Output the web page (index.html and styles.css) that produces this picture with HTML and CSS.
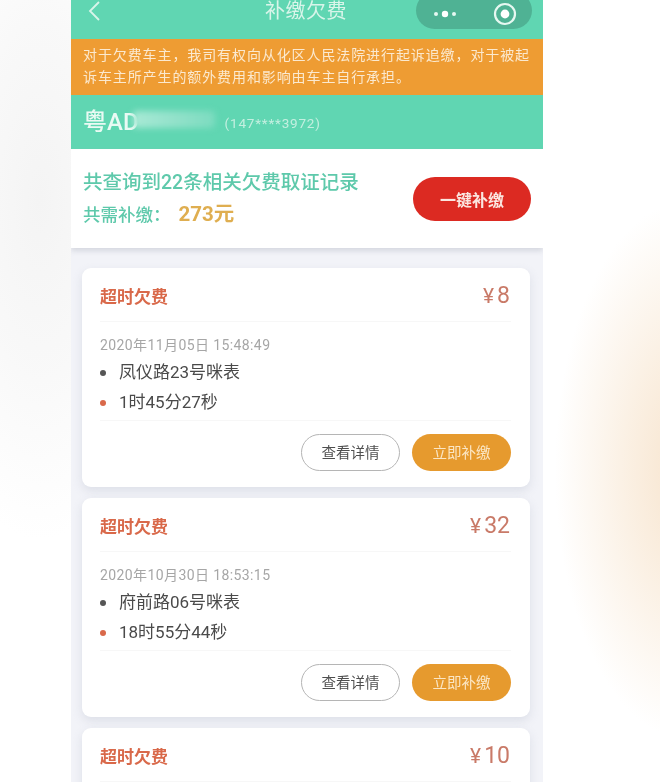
FILE: index.html
```html
<!DOCTYPE html>
<html lang="zh-CN">
<head>
<meta charset="utf-8">
<title>补缴欠费</title>
<link rel="stylesheet" href="styles.css">
</head>
<body>
<main class="phone">
  <header class="nav">
    <svg class="back" width="14" height="24" viewBox="0 0 14 24"><path d="M12 2 3 11l9 9" fill="none" stroke="#d8f5ea" stroke-width="1.8"/></svg>
    <h1 class="nav-title">补缴欠费</h1>
    <div class="capsule">
      <svg width="28" height="10" viewBox="0 0 28 10"><circle cx="4" cy="5" r="2" fill="#e6f8f1"/><circle cx="13" cy="5" r="3.2" fill="#fff"/><circle cx="22" cy="5" r="2" fill="#e6f8f1"/></svg>
      <svg width="24" height="24" viewBox="0 0 24 24"><circle cx="12" cy="12" r="10" fill="none" stroke="#e6f8f1" stroke-width="2.2"/><circle cx="12" cy="12" r="4.4" fill="#fff"/></svg>
    </div>
  </header>
  <p class="notice">对于欠费车主，我司有权向从化区人民法院进行起诉追缴，对于被起诉车主所产生的额外费用和影响由车主自行承担。</p>
  <section class="plate">
    <span class="plate-no">粤AD</span><span class="plate-blur"></span><span class="plate-phone">(147****3972)</span>
  </section>
  <section class="summary">
    <div>
      <p class="summary-count">共查询到22条相关欠费取证记录</p>
      <p class="summary-total">共需补缴：<b>273元</b></p>
    </div>
    <button class="pay-all">一键补缴</button>
  </section>
  <section class="list">
    <article class="card">
      <div class="card-head"><span class="tag">超时欠费</span><span class="price"><i>¥</i>8</span></div>
      <div class="card-body">
        <p class="time">2020年11月05日 15:48:49</p>
        <p class="row">凤仪路23号咪表</p>
        <p class="row row-red">1时45分27秒</p>
      </div>
      <div class="actions"><button class="btn btn-line">查看详情</button><button class="btn btn-pay">立即补缴</button></div>
    </article>
    <article class="card">
      <div class="card-head"><span class="tag">超时欠费</span><span class="price"><i>¥</i>32</span></div>
      <div class="card-body">
        <p class="time">2020年10月30日 18:53:15</p>
        <p class="row">府前路06号咪表</p>
        <p class="row row-red">18时55分44秒</p>
      </div>
      <div class="actions"><button class="btn btn-line">查看详情</button><button class="btn btn-pay">立即补缴</button></div>
    </article>
    <article class="card card-last">
      <div class="card-head"><span class="tag">超时欠费</span><span class="price"><i>¥</i>10</span></div>
    </article>
  </section>
</main>
</body>
</html>
```
FILE: styles.css
```css
* { box-sizing: border-box; }
html, body { margin: 0; height: 782px; overflow: hidden; }
body {
  padding-left: 71px;
  background:
    radial-gradient(ellipse 135px 270px at 690px 470px, #f7e3cc 0%, rgba(249,234,216,.75) 45%, rgba(255,255,255,0) 100%),
    radial-gradient(ellipse 130px 340px at 40px 200px, #f4f4f4 0%, rgba(247,247,247,.8) 50%, rgba(255,255,255,0) 100%),
    #fff;
  font-family: Roboto, "Noto Sans CJK SC", sans-serif;
}
p, h1 { margin: 0; font-weight: 400; }
button { font-family: inherit; border: 0; padding: 0; }
.phone { width: 472px; height: 782px; overflow: hidden; background: #f2f3f8; filter: blur(.6px); }

.nav { height: 39px; background: #60d6b2; display: flex; align-items: flex-start; position: relative; }
.back { margin: 0 0 0 16px; }
.nav-title { position: absolute; left: 0; right: 0; top: 0; text-align: center; font-size: 20px; line-height: 22px; letter-spacing: .5px; color: #d9f5ea; padding-right: 2px; }
.capsule { position: absolute; left: 345px; top: -8px; width: 116px; height: 37px; border-radius: 19px; background: #4fb294; display: flex; align-items: center; justify-content: space-between; padding: 6px 15px 0 16px; }

.notice { height: 56px; background: #ee9c33; color: #fbe9cf; font-size: 14px; line-height: 22px; padding: 5px 0 0 12px; letter-spacing: .9px; }

.plate { height: 54px; background: #60d6b2; display: flex; align-items: center; padding: 0 0 5px 12px; color: #eafaf4; }
.plate-no { font-size: 24px; font-weight: 500; white-space: nowrap; flex: none; }
.plate-blur { width: 82px; height: 17px; margin-left: -6px; border-radius: 4px; background: linear-gradient(90deg, #a8e9d5, #8fe0c8 60%, #7cdcc0); filter: blur(3px); flex: none; }
.plate-phone { font-size: 13.5px; letter-spacing: .8px; color: #c4efe0; margin: 7px 0 0 10px; }

.summary { height: 99px; background: #fff; display: flex; justify-content: space-between; align-items: center; padding: 1px 12px 0 12px; box-shadow: 0 3px 5px rgba(180,185,195,.45); position: relative; }
.summary-count { font-size: 19.5px; line-height: 31px; font-weight: 500; color: #5ec9ab; }
.summary-total { font-size: 17.5px; line-height: 32px; font-weight: 500; color: #5ec9ab; }
.summary-total b { font-weight: 700; color: #dfae50; font-size: 20.5px; margin-left: 8px; }
.pay-all { width: 118px; height: 44px; border-radius: 22px; background: #dc2a22; color: #fbe6e0; font-size: 16px; font-weight: 700; }

.list { padding: 20px 13px 0 11px; display: flex; flex-direction: column; gap: 11px; }
.card { background: #fff; border-radius: 9px; box-shadow: 0 4px 10px rgba(195,200,212,.45); padding: 0 19px 0 18px; flex: none; }
.card-last { height: 100px; }
.card-head { height: 54px; display: flex; justify-content: space-between; align-items: center; border-bottom: 1px solid #f7f7f7; padding-top: 2px; }
.tag { font-size: 17px; font-weight: 700; color: #d9694a; }
.price { font-size: 23px; color: #c97a68; margin-right: 1px; }
.price i { font-style: normal; font-size: 21px; margin-right: 3px; }
.card-body { height: 99px; padding-top: 12px; border-bottom: 1px solid #f7f7f7; }
.time { font-size: 14px; line-height: 23px; letter-spacing: .4px; color: #a6a6a6; }
.row { font-size: 17px; line-height: 30px; color: #4a4a4a; padding-left: 19px; position: relative; }
.row::before { content: ""; position: absolute; left: 0; top: 13px; width: 6px; height: 6px; border-radius: 50%; background: #555; }
.row-red::before { background: #d9694a; }
.actions { height: 66px; display: flex; justify-content: flex-end; align-items: flex-start; gap: 12px; padding-top: 13px; }
.btn { width: 99px; height: 37px; border-radius: 19px; font-size: 14.5px; padding-bottom: 3px; }
.btn-line { background: #fff; border: 1.5px solid #b5b5b5; color: #4f4f4f; }
.btn-pay { background: #e69a2e; color: #fbe6c4; }
```
